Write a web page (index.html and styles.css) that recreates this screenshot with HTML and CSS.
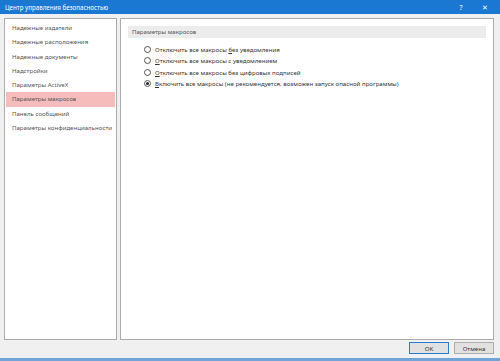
FILE: index.html
```html
<!DOCTYPE html>
<html lang="ru">
<head>
    <meta charset="UTF-8">
    <title>Центр управления безопасностью</title>
    <link rel="stylesheet" href="styles.css">
</head>
<body>
    <div class="window">
        <div class="titlebar">
            <span class="title">Центр управления безопасностью</span>
            <span class="tb-btn help">?</span>
            <span class="tb-btn close">✕</span>
        </div>

        <div class="main">
            <ul class="nav">
                <li>Надежные издатели</li>
                <li>Надежные расположения</li>
                <li>Надежные документы</li>
                <li>Надстройки</li>
                <li>Параметры ActiveX</li>
                <li class="active">Параметры макросов</li>
                <li>Панель сообщений</li>
                <li>Параметры конфиденциальности</li>
            </ul>

            <div class="content">
                <div class="section-head">Параметры макросов</div>
                <div class="options">
                    <label class="option"><span class="radio"></span><span>Отключить все макросы <u>б</u>ез уведомления</span></label>
                    <label class="option"><span class="radio"></span><span><u>О</u>тключить все макросы с уведомлением</span></label>
                    <label class="option"><span class="radio"></span><span><u>О</u>тключить все макросы без цифровых подписей</span></label>
                    <label class="option"><span class="radio checked"></span><span><u>В</u>ключить все макросы (не рекомендуется, возможен запуск опасной программы)</span></label>
                </div>
            </div>
        </div>

        <div class="footer">
            <button class="btn default">OK</button>
            <button class="btn">Отмена</button>
        </div>
    </div>
</body>
</html>
```

FILE: styles.css
```css
body {
    margin: 0;
    font-family: "Noto Sans", "Liberation Sans", sans-serif;
    background-color: #f0f0f0;
}

.window {
    width: 500px;
    height: 361px;
    display: flex;
    flex-direction: column;
    background: #f0f0f0;
    border-bottom: 3px solid #6fa5d6;
    box-sizing: border-box;
}

.titlebar {
    height: 14px;
    background: #1a78d2;
    color: #ffffff;
    display: flex;
    align-items: center;
    font-size: 6.2px;
    padding-left: 5px;
}

.title {
    flex: 1;
}

.tb-btn {
    width: 24px;
    text-align: center;
    font-size: 7px;
}

.close {
    margin-right: 3px;
}

.main {
    display: flex;
    gap: 3px;
    padding: 4px 6px 0 4px;
    height: 322px;
}

.nav {
    width: 113px;
    margin: 0;
    padding: 2px 1px 0 1px;
    list-style: none;
    background: #ffffff;
    border: 1px solid #ababab;
    box-sizing: border-box;
}

.nav li {
    height: 14.3px;
    line-height: 14.3px;
    padding-left: 6px;
    font-size: 6.1px;
    color: #555555;
    white-space: nowrap;
}

.nav li.active {
    background: #f6bcbc;
}

.content {
    flex: 1;
    background: #ffffff;
    border: 1px solid #ababab;
    padding: 7px 7px 0 7px;
}

.section-head {
    height: 12px;
    line-height: 12px;
    background: #ececec;
    padding-left: 4px;
    font-size: 6.1px;
    color: #555555;
}

.options {
    padding: 6px 0 0 16px;
}

.option {
    display: flex;
    align-items: center;
    height: 11.3px;
    font-size: 6.1px;
    color: #333333;
    white-space: nowrap;
}

.radio {
    width: 5px;
    height: 5px;
    border: 1px solid #555555;
    border-radius: 50%;
    margin-right: 4px;
    display: flex;
    align-items: center;
    justify-content: center;
    background: #ffffff;
}

.radio.checked::after {
    content: "";
    width: 3px;
    height: 3px;
    border-radius: 50%;
    background: #222222;
}

.footer {
    display: flex;
    justify-content: flex-end;
    gap: 5px;
    padding: 2px 6px 0 0;
}

.btn {
    width: 40px;
    height: 12px;
    padding: 0;
    font-family: "Noto Sans", "Liberation Sans", sans-serif;
    font-size: 6.1px;
    color: #333333;
    background: #e1e1e1;
    border: 1px solid #adadad;
}

.btn.default {
    border-color: #2c7bd3;
}
```
